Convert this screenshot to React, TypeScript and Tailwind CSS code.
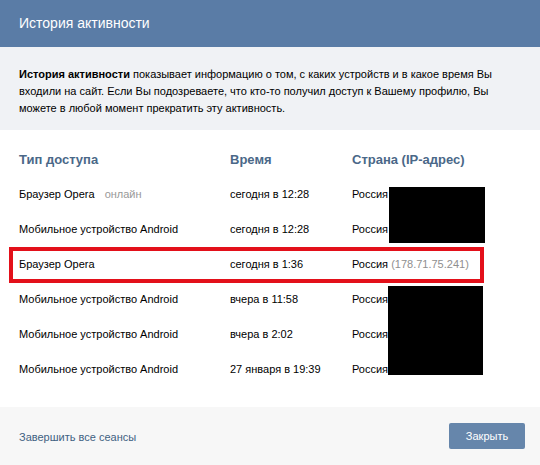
import React from 'react';

const rows = [
    { type: 'Браузер Opera', online: true, time: 'сегодня в 12:28', ip: '' },
    { type: 'Мобильное устройство Android', time: 'сегодня в 12:28', ip: '' },
    { type: 'Браузер Opera', time: 'сегодня в 1:36', ip: '(178.71.75.241)', marked: true },
    { type: 'Мобильное устройство Android', time: 'вчера в 11:58', ip: '' },
    { type: 'Мобильное устройство Android', time: 'вчера в 2:02', ip: '' },
    { type: 'Мобильное устройство Android', time: '27 января в 19:39', ip: '' },
];

export default function App() {
    return (
        <div className="w-[540px] h-[465px] bg-white flex flex-col text-[11px] text-black font-['Liberation_Sans','DejaVu_Sans',sans-serif]">
            {/* Title bar */}
            <div className="h-[47px] shrink-0 bg-[#5a7ca6] px-[19px] flex items-center">
                <span className="text-[14px] text-white">История активности</span>
            </div>

            {/* Intro */}
            <p className="bg-[#f0f2f5] px-[19px] pt-[19px] pb-[13px] leading-[17px]">
                <b>История активности</b> показывает информацию о том, с каких устройств и в какое время Вы
                входили на сайт. Если Вы подозреваете, что кто-то получил доступ к Вашему профилю, Вы
                можете в любой момент прекратить эту активность.
            </p>

            {/* Table */}
            <div className="pt-[12px] pb-[20px]">
                <div className="h-[35px] flex items-center text-[13px] font-bold text-[#4a6888]">
                    <div className="w-[230px] pl-[19px]">Тип доступа</div>
                    <div className="w-[122px]">Время</div>
                    <div>Страна (IP-адрес)</div>
                </div>
                <div className="relative">
                    {rows.map((r, i) => (
                        <div key={i} className="relative h-[35px] flex items-center">
                            <div className="w-[230px] pl-[19px]">
                                {r.type}
                                {r.online && <span className="ml-[10px] text-[#999]">онлайн</span>}
                            </div>
                            <div className="w-[122px]">{r.time}</div>
                            <div>
                                Россия {r.ip && <span className="text-[#8f8f8f]">{r.ip}</span>}
                            </div>
                            {r.marked && (
                                <div className="absolute left-[9px] top-0 w-[475px] h-[36px] border-[4px] border-[#e3101a]"></div>
                            )}
                        </div>
                    ))}
                    {/* redacted addresses */}
                    <div className="absolute left-[389px] top-[10px] w-[96px] h-[56px] bg-black"></div>
                    <div className="absolute left-[388px] top-[109px] w-[95px] h-[89px] bg-black"></div>
                </div>
            </div>

            {/* Footer */}
            <div className="flex-1 bg-[#f7f7f7] px-[15px] flex items-center justify-between">
                <span className="pl-[4px] pt-[3px] text-[#3f6182]">Завершить все сеансы</span>
                <button className="w-[76px] h-[26px] rounded-[2px] bg-[#6686ab] text-white text-[11px]">
                    Закрыть
                </button>
            </div>
        </div>
    );
}
